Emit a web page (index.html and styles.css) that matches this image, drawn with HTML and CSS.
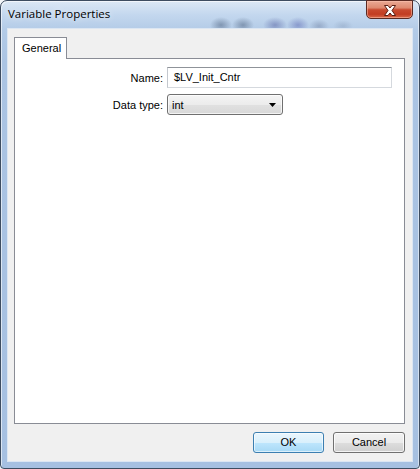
FILE: index.html
```html
<!DOCTYPE html>
<html>
<head>
<meta charset="utf-8">
<title>Variable Properties</title>
<link rel="stylesheet" href="styles.css">
</head>
<body>
<div class="window">
  <div class="titlebar">
    <span class="title">Variable Properties</span>
    <div class="close">
      <svg width="14" height="11" viewBox="0 0 14 11"><path d="M1.5 0.5 H5 L7 3 L9 0.5 H12.5 L9 5.5 L12.5 10.5 H9 L7 8 L5 10.5 H1.5 L5 5.5 Z" fill="#fff" stroke="#5a1d12" stroke-width="1" stroke-linejoin="round"/></svg>
    </div>
  </div>
  <div class="client">
    <div class="tabs"><div class="tab">General</div></div>
    <div class="page">
      <div class="form">
        <span class="label">Name:</span>
        <div class="textbox">$LV_Init_Cntr</div>
        <span class="label">Data type:</span>
        <div class="combo"><span>int</span><svg width="7" height="4" viewBox="0 0 7 4"><path d="M0 0 H7 L3.5 4 Z" fill="#000"/></svg></div>
      </div>
    </div>
    <div class="buttons">
      <div class="btn default">OK</div>
      <div class="btn">Cancel</div>
    </div>
  </div>
</div>
</body>
</html>
```
FILE: styles.css
```css
html, body { margin: 0; padding: 0; background: #f4f6f9; }
body { width: 420px; height: 469px; overflow: hidden; font-family: "Liberation Sans", Arial, sans-serif; font-size: 11px; color: #000; }
.window {
  width: 420px; height: 469px; box-sizing: border-box;
  border: 1px solid #3d4c60; border-radius: 7px 7px 4px 4px;
  display: flex; flex-direction: column;
  background:
    radial-gradient(ellipse 11px 8px at 220px 24px, rgba(60,80,110,.45), transparent),
    radial-gradient(ellipse 11px 8px at 242px 24px, rgba(60,80,110,.45), transparent),
    radial-gradient(ellipse 12px 8px at 274px 24px, rgba(70,80,150,.45), transparent),
    radial-gradient(ellipse 11px 8px at 297px 24px, rgba(80,90,170,.45), transparent),
    radial-gradient(ellipse 10px 7px at 318px 25px, rgba(90,105,140,.35), transparent),
    radial-gradient(ellipse 10px 6px at 342px 25px, rgba(110,130,160,.28), transparent),
    linear-gradient(to bottom, #dce8f5 0px, #c3d7ee 14px, #b3cbe7 29px, #abc4e3 60px, #a6c0e1 100%);
  box-shadow: inset 1px 1px 0 rgba(255,255,255,.6), inset -1px 0 0 rgba(255,255,255,.5);
}
.titlebar { height: 28px; display: flex; align-items: flex-start; padding: 0 6px 0 7px; }
.title { font-family: "Open Sans", "Liberation Sans", sans-serif; font-size: 11.5px; line-height: 14px; margin-top: 6px; color: #000; text-shadow: 0 0 6px rgba(255,255,255,.9); flex: 1; }
.close {
  width: 47px; height: 19px; margin-top: -1px; box-sizing: border-box;
  border: 1px solid #5b2a22; border-radius: 0 0 5px 5px;
  background: linear-gradient(to bottom, #eaa995 0%, #de8a70 40%, #c8492e 52%, #c23d22 78%, #d9694a 100%);
  box-shadow: inset 0 0 0 1px rgba(255,200,180,.5);
  display: flex; align-items: center; justify-content: center; padding-top: 1px;
}
.close svg { display: block; }
.client {
  flex: 1; margin: 0 7px 7px; background: #f0f0f0;
  display: flex; flex-direction: column; padding: 8px 7px 8px 6px;
  box-shadow: 0 0 0 1px #dce6f2;
}
.tabs { display: flex; height: 21px; }
.tab {
  position: relative; z-index: 1;
  box-sizing: border-box; height: 22px; width: 53px;
  border: 1px solid #898c95; border-bottom: none; background: #fff;
  padding: 4px 0 0 7px; line-height: 13px;
}
.page { flex: 1; background: #fff; border: 1px solid #898c95; padding-top: 8px; }
.form { display: grid; grid-template-columns: 148px 225px; column-gap: 4px; row-gap: 6px; align-items: center; }
.label { text-align: right; }
.textbox {
  box-sizing: border-box; height: 21px; line-height: 19px; padding: 0 6px;
  border: 1px solid #abadb3; border-top-color: #8f9399; border-left-color: #c4c8ce; border-right-color: #d5d9de; border-bottom-color: #d5d9de;
  background: #fff;
}
.combo {
  box-sizing: border-box; width: 116px; height: 21px; padding: 0 6px 0 4px;
  border: 1px solid #707070; border-radius: 3px;
  background: linear-gradient(to bottom, #f4f4f4 0%, #ececec 50%, #e1e1e1 51%, #d8d8d8 100%);
  box-shadow: inset 0 0 0 1px rgba(255,255,255,.7);
  display: flex; align-items: center; justify-content: space-between;
}
.combo svg { display: block; }
.buttons { display: flex; justify-content: flex-end; gap: 9px; margin-top: 8px; }
.btn {
  box-sizing: border-box; height: 21px; width: 71px; text-align: center; line-height: 19px;
  border: 1px solid #707070; border-radius: 3px;
  background: linear-gradient(to bottom, #f2f2f2 0%, #ebebeb 50%, #dddddd 51%, #cfcfcf 100%);
  box-shadow: inset 0 0 0 1px rgba(255,255,255,.75);
}
.btn + .btn { width: 72px; }
.btn.default {
  border-color: #3c7fb1;
  background: linear-gradient(to bottom, #eaf6fd 0%, #d9f0fc 50%, #bee6fd 51%, #a7d9f5 100%);
  box-shadow: inset 0 0 0 1px rgba(255,255,255,.6);
}
```
